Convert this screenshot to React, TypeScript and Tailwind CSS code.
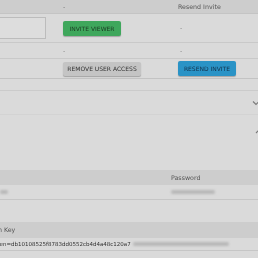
import React from "react";

const font = { fontFamily: '"DejaVu Sans", Verdana, sans-serif' };

function Chevron({ up }: { up?: boolean }) {
  return (
    <svg width="8" height="6" viewBox="0 0 8 6" className="text-[#7a7a7a]">
      <path
        d={up ? "M1 5 L4 2 L7 5" : "M1 1.5 L4 4.5 L7 1.5"}
        fill="none"
        stroke="currentColor"
        strokeWidth="1.1"
      />
    </svg>
  );
}

function Blurred({ w }: { w: number }) {
  return (
    <span
      className="inline-block h-[4px] rounded-sm bg-[#b8b8b8] blur-[1px]"
      style={{ width: w }}
    />
  );
}

export default function App() {
  return (
    <div
      className="w-[258px] h-[258px] overflow-hidden bg-[#dadada] text-[#444] blur-[0.3px]"
      style={font}
    >
      {/* invite table */}
      <div className="grid grid-cols-[62px_116px_1fr] text-[6.3px]">
        <div className="h-[14px] bg-[#cdcdcd] border-b border-[#c4c4c4]" />
        <div className="h-[14px] bg-[#cdcdcd] border-b border-[#c4c4c4] flex items-center pl-[1px] text-[#777]">
          -
        </div>
        <div className="h-[14px] bg-[#cdcdcd] border-b border-[#c4c4c4] flex items-center text-[#555]">
          Resend Invite
        </div>

        <div className="h-[29px] border-b border-[#c9c9c9] flex items-center">
          <div className="w-[46px] h-[22px] bg-[#dddddd] border border-l-0 border-[#bcbcbc]" />
        </div>
        <div className="h-[29px] border-b border-[#c9c9c9] flex items-center pl-[1px]">
          <button className="h-[15px] w-[58px] rounded-[2px] bg-[#3fa75c] text-[6px] text-[#1a3a22] shadow-[0_1px_1px_rgba(0,0,0,0.25)]">
            INVITE VIEWER
          </button>
        </div>
        <div className="h-[29px] border-b border-[#c9c9c9] flex items-center pl-[2px] text-[#888]">
          -
        </div>

        <div className="h-[16px] border-b border-[#c9c9c9]" />
        <div className="h-[16px] border-b border-[#c9c9c9] flex items-center pl-[1px] text-[#888]">
          -
        </div>
        <div className="h-[16px] border-b border-[#c9c9c9] flex items-center pl-[2px] text-[#888]">
          -
        </div>

        <div className="h-[20px] border-b border-[#c3c3c3]" />
        <div className="h-[20px] border-b border-[#c3c3c3] flex items-center pl-[1px]">
          <button className="h-[14px] w-[78px] rounded-[2px] bg-[#c4c4c4] text-[6px] text-[#333] shadow-[0_1px_1px_rgba(0,0,0,0.25)]">
            REMOVE USER ACCESS
          </button>
        </div>
        <div className="h-[20px] border-b border-[#c3c3c3] flex items-center">
          <button className="h-[15px] w-[58px] rounded-[2px] bg-[#2a93c6] text-[6px] text-[#12304a] shadow-[0_1px_1px_rgba(0,0,0,0.25)]">
            RESEND INVITE
          </button>
        </div>
      </div>

      {/* collapsible sections */}
      <div className="h-[11px]" />
      <div className="border-t border-[#cbcbcb] h-[24px] flex items-center justify-end mr-[-2px]">
        <Chevron />
      </div>
      <div className="border-t border-[#d3d3d3] h-[56px] flex items-start justify-end pt-[13px] mr-[-5px]">
        <Chevron up />
      </div>

      {/* credentials */}
      <div className="grid grid-cols-[171px_1fr] text-[6.3px]">
        <div className="h-[15px] bg-[#cdcdcd]" />
        <div className="h-[15px] bg-[#cdcdcd] flex items-center text-[#555]">
          Password
        </div>
        <div className="h-[15px] border-b border-[#c6c6c6] flex items-center">
          <Blurred w={8} />
        </div>
        <div className="h-[15px] border-b border-[#c6c6c6] flex items-center">
          <Blurred w={44} />
        </div>
      </div>

      <div className="h-[22px]" />
      <div className="h-[16px] bg-[#cdcdcd] flex items-center text-[6.3px] text-[#555] -ml-[28px]">
        API Token Key
      </div>
      <div className="h-[13px] border-b border-[#c6c6c6] flex items-center text-[5.5px] text-[#333] whitespace-nowrap -ml-[9px] gap-[2px]">
        <span>token=db10108525f8783dd0552cb4d4a48c120a7</span>
        <Blurred w={96} />
      </div>
    </div>
  );
}
